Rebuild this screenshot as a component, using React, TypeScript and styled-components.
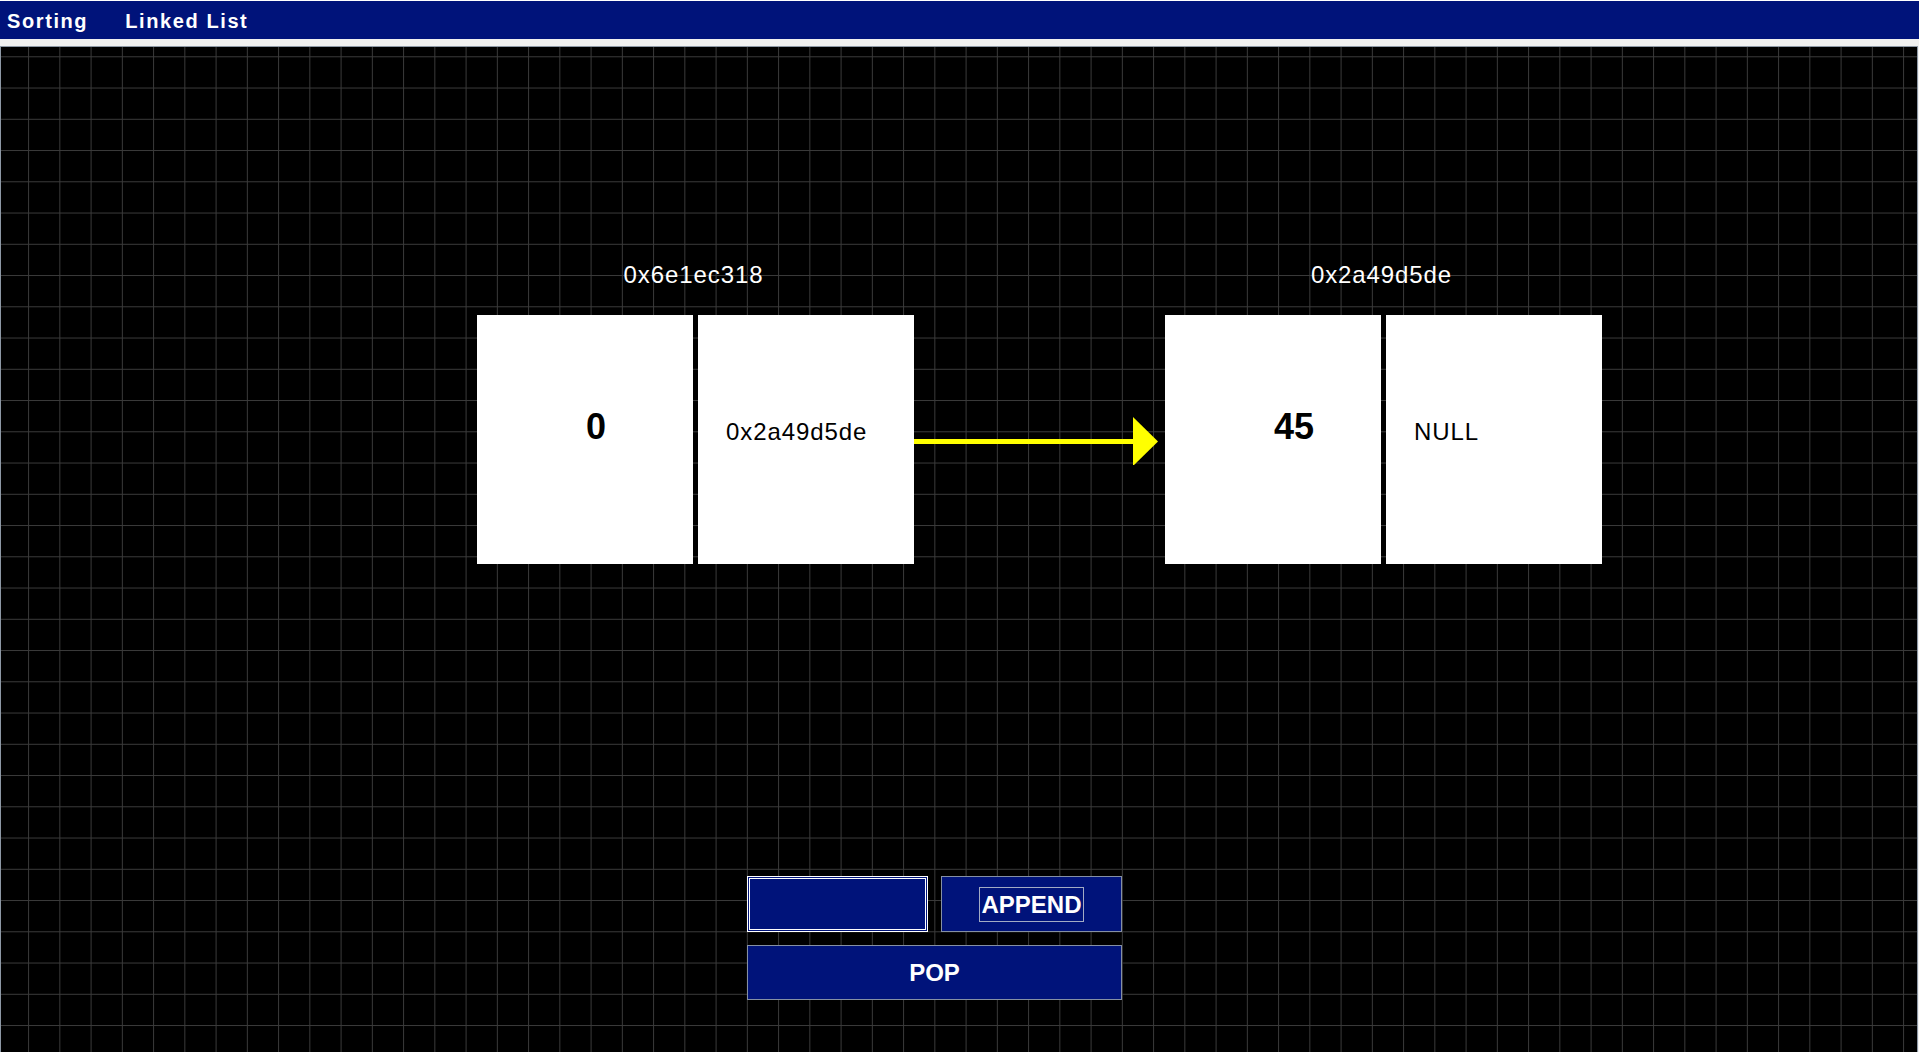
import React from "react";
import styled, { createGlobalStyle } from "styled-components";

const NAVY = "#00137a";
const GRID = "#3b3b3b";
const STEP = "31.257px";

const GlobalStyle = createGlobalStyle`
  html, body {
    margin: 0;
    padding: 0;
    background: #f0f0f0;
    font-family: "Liberation Sans", Arial, sans-serif;
    overflow: hidden;
  }
  * { box-sizing: border-box; }
`;

const Page = styled.div`
  width: 1919px;
  height: 1052px;
  display: flex;
  flex-direction: column;
  background: #f0f0f0;
`;

const NavBar = styled.nav`
  height: 39px;
  border-top: 1px solid #ffffff;
  background: ${NAVY};
  display: flex;
  align-items: flex-start;
  gap: 37px;
  padding: 2px 0 0 7px;
`;

const NavItem = styled.a`
  color: #ffffff;
  font-weight: bold;
  font-size: 20px;
  line-height: 36px;
  letter-spacing: 1.6px;
  text-decoration: none;
  cursor: pointer;
`;

const Canvas = styled.main`
  margin-top: 7px;
  width: 1918px;
  flex: 1;
  border: 1px solid #8d98a5;
  border-bottom: none;
  background-color: #000000;
  background-image:
    linear-gradient(to right, ${GRID} 1px, transparent 1px),
    linear-gradient(to bottom, ${GRID} 1px, transparent 1px);
  background-size: ${STEP} ${STEP};
  background-position: 27.1px 9.3px;
  display: flex;
  flex-direction: column;
`;

const NodesRow = styled.div`
  margin-top: 214px;
  padding-left: 476px;
  display: flex;
  align-items: flex-end;
`;

const NodeBox = styled.div`
  display: flex;
  flex-direction: column;
  width: 437px;
`;

const Address = styled.div`
  height: 28px;
  line-height: 28px;
  margin-bottom: 26px;
  text-align: center;
  color: #ffffff;
  font-size: 24px;
  letter-spacing: 0.9px;
  padding-right: 4px;
`;

const Cells = styled.div`
  display: flex;
  gap: 5px;
`;

const Cell = styled.div<{ $kind: "value" | "pointer" }>`
  width: 216px;
  height: 249px;
  background: #ffffff;
  color: #000000;
  padding-left: ${(p) => (p.$kind === "value" ? "109px" : "28px")};
  padding-top: ${(p) => (p.$kind === "value" ? "94px" : "105px")};
  font-size: ${(p) => (p.$kind === "value" ? "36px" : "24px")};
  line-height: ${(p) => (p.$kind === "value" ? "36px" : "24px")};
  font-weight: ${(p) => (p.$kind === "value" ? "bold" : "normal")};
  letter-spacing: ${(p) => (p.$kind === "value" ? "0" : "0.9px")};
`;

const ArrowSlot = styled.div`
  width: 251px;
  height: 249px;
  display: flex;
  align-items: center;
  padding-top: 2px;
`;

const Controls = styled.div`
  margin-top: 312px;
  margin-left: 746px;
  display: grid;
  grid-template-columns: 181px 181px;
  grid-template-rows: 56px 55px;
  column-gap: 13px;
  row-gap: 13px;
  width: 375px;
`;

const ValueInput = styled.input`
  width: 181px;
  height: 56px;
  background: ${NAVY};
  border: 1px solid #ffffff;
  box-shadow: inset 0 0 0 1px ${NAVY}, inset 0 0 0 2px #ffffff;
  color: #ffffff;
  font-family: "Liberation Sans", Arial, sans-serif;
  font-size: 24px;
  padding: 0 8px;
  outline: none;
`;

const ActionButton = styled.button<{ $wide?: boolean }>`
  grid-column: ${(p) => (p.$wide ? "1 / span 2" : "auto")};
  background: ${NAVY};
  border: 1px solid #8590a4;
  color: #ffffff;
  font-family: "Liberation Sans", Arial, sans-serif;
  font-weight: bold;
  font-size: 24px;
  display: flex;
  align-items: center;
  justify-content: center;
  padding: 0;
  cursor: pointer;
`;

const FocusLabel = styled.span`
  border: 1px solid #a3abc4;
  padding: 5px 1px 5px 1px;
  line-height: 23px;
`;

const Arrow: React.FC = () => (
  <svg width="251" height="48" viewBox="0 0 251 48">
    <rect x="0" y="22" width="221" height="5" fill="#ffff00" />
    <polygon points="219,0 244,24.5 219,49" fill="#ffff00" />
  </svg>
);

type NodeData = { address: string; value: string; next: string };

const nodes: NodeData[] = [
  { address: "0x6e1ec318", value: "0", next: "0x2a49d5de" },
  { address: "0x2a49d5de", value: "45", next: "NULL" },
];

const Node: React.FC<{ data: NodeData }> = ({ data }) => (
  <NodeBox>
    <Address>{data.address}</Address>
    <Cells>
      <Cell $kind="value">{data.value}</Cell>
      <Cell $kind="pointer">{data.next}</Cell>
    </Cells>
  </NodeBox>
);

export default function App() {
  return (
    <>
      <GlobalStyle />
      <Page>
        <NavBar>
          <NavItem>Sorting</NavItem>
          <NavItem>Linked List</NavItem>
        </NavBar>
        <Canvas>
          <NodesRow>
            {nodes.map((n, i) => (
              <React.Fragment key={n.address}>
                {i > 0 && (
                  <ArrowSlot>
                    <Arrow />
                  </ArrowSlot>
                )}
                <Node data={n} />
              </React.Fragment>
            ))}
          </NodesRow>
          <Controls>
            <ValueInput type="text" />
            <ActionButton>
              <FocusLabel>APPEND</FocusLabel>
            </ActionButton>
            <ActionButton $wide>POP</ActionButton>
          </Controls>
        </Canvas>
      </Page>
    </>
  );
}
